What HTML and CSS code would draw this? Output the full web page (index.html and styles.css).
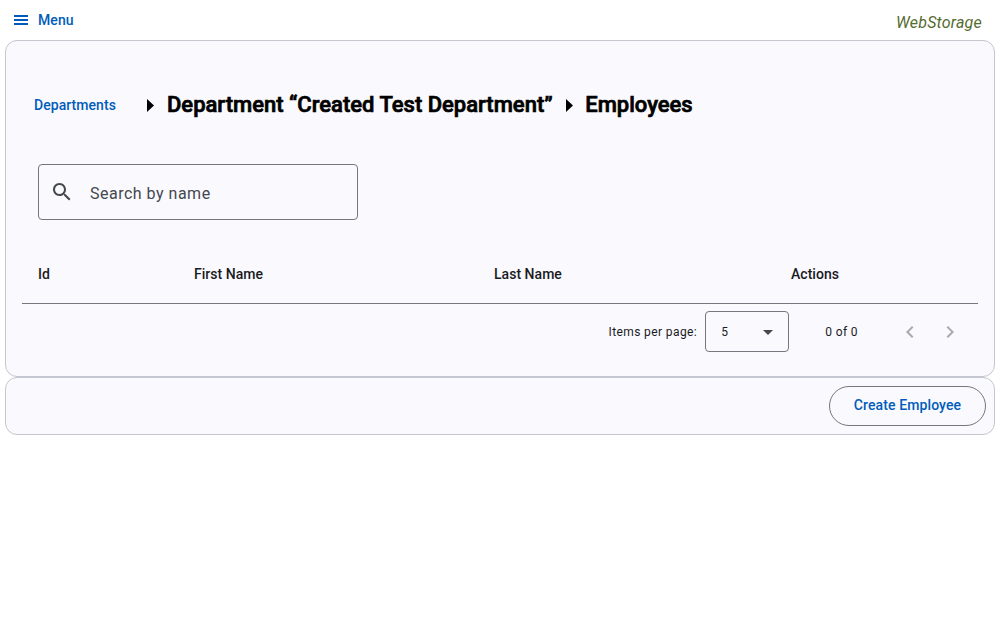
FILE: index.html
```html
<!DOCTYPE html>
<html lang="en">
<head>
<meta charset="utf-8">
<title>WebStorage</title>
<link rel="stylesheet" href="styles.css">
</head>
<body>
<header class="topbar">
  <button class="menu-button">
    <svg class="menu-icon" viewBox="0 0 18 18"><path d="M2 4h14v2H2zM2 8h14v2H2zM2 12h14v2H2z"/></svg>
    <span>Menu</span>
  </button>
  <em class="brand">WebStorage</em>
</header>
<main class="card content">
  <nav class="breadcrumbs">
    <a class="crumb-link">Departments</a>
    <svg class="crumb-arrow" viewBox="0 0 7 13"><path d="M0 0l7 6.5L0 13z"/></svg>
    <h1 class="crumb-title">Department “Created Test Department”</h1>
    <svg class="crumb-arrow" viewBox="0 0 7 13"><path d="M0 0l7 6.5L0 13z"/></svg>
    <h1 class="crumb-title">Employees</h1>
  </nav>
  <label class="search">
    <svg class="search-icon" viewBox="0 0 24 24"><path d="M15.5 14h-.79l-.28-.27C15.41 12.59 16 11.11 16 9.5 16 5.91 13.09 3 9.5 3S3 5.91 3 9.5 5.91 16 9.5 16c1.61 0 3.09-.59 4.23-1.57l.27.28v.79l5 4.99L20.49 19l-4.99-5zm-6 0C7.01 14 5 11.99 5 9.5S7.01 5 9.5 5 14 7.01 14 9.5 11.99 14 9.5 14z"/></svg>
    <span class="search-label">Search by name</span>
  </label>
  <div class="table-head">
    <span>Id</span><span>First Name</span><span>Last Name</span><span>Actions</span>
  </div>
  <div class="paginator">
    <span class="page-label">Items per page:</span>
    <div class="page-size"><span>5</span><svg class="caret" viewBox="0 0 10 5"><path d="M0 0l5 5 5-5z"/></svg></div>
    <span class="range">0 of 0</span>
    <svg class="page-nav" viewBox="0 0 24 24"><path d="M15.41 7.41L14 6l-6 6 6 6 1.41-1.41L10.83 12z"/></svg>
    <svg class="page-nav" viewBox="0 0 24 24"><path d="M10 6L8.59 7.41 13.17 12l-4.58 4.59L10 18l6-6z"/></svg>
  </div>
</main>
<footer class="card actions">
  <button class="create-button">Create Employee</button>
</footer>
</body>
</html>
```

FILE: styles.css
```css
* { box-sizing: border-box; }
body { margin: 0; font-family: Roboto, sans-serif; color: #1a1b1f; background: #fff; }
button { font-family: inherit; background: none; border: 0; padding: 0; color: #005cbb; font-size: 14px; font-weight: 500; letter-spacing: 0.1px; }
svg { flex: none; display: block; fill: currentColor; }
.topbar { height: 40px; display: flex; justify-content: space-between; align-items: center; padding: 0 18px 0 12px; }
.menu-button { display: flex; align-items: center; gap: 8px; line-height: 20px; }
.menu-icon { width: 18px; height: 18px; }
.brand { font-size: 16px; color: #556b2f; line-height: 20px; padding-top: 5px; letter-spacing: 0.22px; }
.card { margin: 0 5px; border: 1px solid #c4c6d0; border-radius: 12px; background: #faf9fd; }
.content { height: 337px; padding: 44px 16px 0; }
.breadcrumbs { display: flex; align-items: center; height: 40px; padding-left: 12px; }
.crumb-link { color: #005cbb; font-size: 14px; font-weight: 500; letter-spacing: 0.05px; width: 100.4px; }
.crumb-arrow { width: 7px; height: 13px; margin: 0 0 0 13px; color: #000; }
.crumb-title { margin: 0 0 0 12.6px; font-size: 22px; line-height: 28px; font-weight: 500; -webkit-text-stroke: 0.7px #000; color: #000; white-space: nowrap; }
.search { width: 320px; height: 56px; margin: 39px 0 0 16px; border: 1px solid #74777f; border-radius: 4px; display: flex; align-items: center; padding-left: 11px; gap: 16px; font-size: 16px; letter-spacing: 0.5px; color: #44474e; }
.search-icon { width: 24px; height: 24px; }
.search-label { padding-top: 2px; }
.table-head { display: grid; grid-template-columns: 156px 300px 297px 1fr; height: 56px; margin-top: 28px; padding: 0 0 4px 16px; align-items: center; border-bottom: 1px solid #74777f; font-size: 14px; font-weight: 500; letter-spacing: 0.03px; }
.paginator { display: flex; justify-content: flex-end; align-items: center; height: 56px; padding-right: 8px; font-size: 12px; letter-spacing: 0.4px; }
.page-size { width: 84px; height: 41px; margin: 0 0 1px 8px; border: 1px solid #74777f; border-radius: 4px; padding: 0 15px; display: flex; align-items: center; justify-content: space-between; }
.caret { width: 10px; height: 5px; color: #44474e; margin-top: 1px; }
.range { margin: 0 32px 0 36px; }
.page-nav { width: 24px; height: 24px; margin: 0 8px; color: #aaabae; }
.actions { height: 58px; display: flex; align-items: center; justify-content: flex-end; padding: 0 8px; }
.create-button { width: 157px; height: 40px; border: 1px solid #74777f; border-radius: 20px; padding-bottom: 2px; }
```
